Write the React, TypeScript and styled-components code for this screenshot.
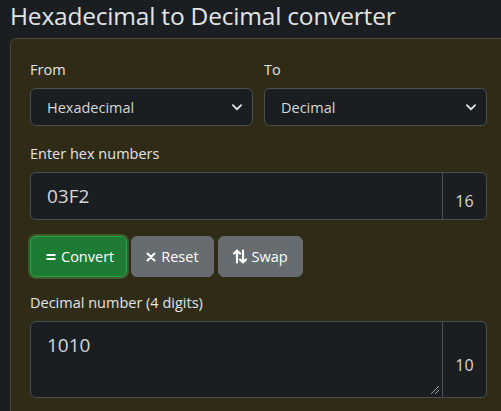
import React from "react";
import styled, { createGlobalStyle } from "styled-components";

const Global = createGlobalStyle`
  html, body { margin: 0; padding: 0; }
  body {
    background: #1b1e21;
    color: #dee2e6;
    font-family: "Open Sans", "Noto Sans", "Liberation Sans", sans-serif;
    overflow: hidden;
  }
  * { box-sizing: border-box; }
`;

const Page = styled.div`
  padding: 0 0 0 10px;
  width: 501px;
  height: 411px;
  overflow: hidden;
`;

const Title = styled.h2`
  margin: 0;
  padding-top: 0px;
  font-size: 24.5px;
  font-weight: 400;
  line-height: 32px;
  letter-spacing: -0.2px;
  color: #e1e4e7;
  white-space: nowrap;
`;

const Card = styled.div`
  margin-top: 6px;
  width: 540px;
  height: 400px;
  background: #302b16;
  border: 1px solid #4b4a3c;
  border-radius: 6px;
  padding: 20px 0 0 19px;
`;

const Content = styled.div`
  width: 457px;
  display: flex;
  flex-direction: column;
`;

const Row = styled.div`
  display: grid;
  grid-template-columns: 1fr 1fr;
  column-gap: 11px;
`;

const Field = styled.div`
  display: flex;
  flex-direction: column;
`;

const Label = styled.label<{ $mt?: number }>`
  font-size: 14.5px;
  line-height: 22px;
  color: #e1e4e7;
  margin-top: ${(p) => p.$mt ?? 0}px;
  margin-bottom: 7px;
  white-space: nowrap;
`;

const SelectBox = styled.div`
  height: 38px;
  border: 1px solid #4a4f54;
  border-radius: 6px;
  background: #1b1e21;
  display: flex;
  align-items: center;
  justify-content: space-between;
  padding: 0 9px 0 16px;
  font-size: 14.5px;
  color: #d4d7da;
`;

const Chevron = () => (
  <svg width="12" height="12" viewBox="0 0 16 16" fill="none">
    <path d="M2.5 5.5 8 11l5.5-5.5" stroke="#dee2e6" strokeWidth="2.4" strokeLinecap="round" strokeLinejoin="round" />
  </svg>
);

const Group = styled.div<{ $h: number }>`
  display: flex;
  height: ${(p) => p.$h}px;
`;

const Input = styled.div<{ $textarea?: boolean }>`
  flex: 1;
  position: relative;
  background: #1b1e21;
  border: 1px solid #4a4f54;
  border-radius: 6px 0 0 6px;
  padding: ${(p) => (p.$textarea ? "10px 16px" : "0 16px")};
  display: flex;
  align-items: ${(p) => (p.$textarea ? "flex-start" : "center")};
  font-size: 19px;
  color: #d4d7da;
`;

const Grip = styled.svg`
  position: absolute;
  right: 2px;
  bottom: 2px;
`;

const Addon = styled.div<{ $pt: number }>`
  width: 45px;
  margin-left: -1px;
  background: #1b1e21;
  border: 1px solid #4a4f54;
  border-radius: 0 6px 6px 0;
  display: flex;
  justify-content: center;
  align-items: center;
  padding-top: ${(p) => p.$pt}px;
  font-size: 16px;
  color: #d4d7da;
`;

const Buttons = styled.div`
  display: flex;
  gap: 4px;
  margin-top: 16px;
  align-items: center;
`;

const Btn = styled.button<{ $variant: "success" | "secondary" }>`
  height: 41px;
  border-radius: 6px;
  font-family: inherit;
  font-size: 14.5px;
  color: #fff;
  display: flex;
  align-items: center;
  gap: 5px;
  cursor: pointer;
  ${(p) =>
    p.$variant === "success"
      ? `
    background: #1e7b34;
    border: 1px solid #2aa14a;
    box-shadow: 0 0 0 2px #3c5a2b;
    padding: 0 12px 0 15px;
  `
      : `
    background: #666c70;
    border: 1px solid #666c70;
    padding: 0 14px;
  `}
`;

const EqIcon = () => (
  <svg width="10" height="10" viewBox="0 0 10 10">
    <rect x="0.5" y="2" width="9" height="2" fill="#fff" />
    <rect x="0.5" y="6" width="9" height="2" fill="#fff" />
  </svg>
);

const XIcon = () => (
  <svg width="10" height="10" viewBox="0 0 10 10">
    <path d="M1.5 1.5 8.5 8.5M8.5 1.5 1.5 8.5" stroke="#fff" strokeWidth="2" strokeLinecap="round" />
  </svg>
);

const SwapIcon = () => (
  <svg width="14" height="15" viewBox="0 0 14 15" fill="none" stroke="#fff" strokeWidth="2.2" strokeLinecap="round" strokeLinejoin="round">
    <path d="M4 13.5V1.5M1 4.5 4 1.5l3 3" />
    <path d="M10 1.5v12M7 10.5l3 3 3-3" />
  </svg>
);

export default function App() {
  return (
    <>
      <Global />
      <Page>
        <Title>Hexadecimal to Decimal converter</Title>
        <Card>
          <Content>
            <Row>
              <Field>
                <Label>From</Label>
                <SelectBox>
                  <span>Hexadecimal</span>
                  <Chevron />
                </SelectBox>
              </Field>
              <Field>
                <Label>To</Label>
                <SelectBox>
                  <span>Decimal</span>
                  <Chevron />
                </SelectBox>
              </Field>
            </Row>
            <Label $mt={17}>Enter hex numbers</Label>
            <Group $h={48}>
              <Input>03F2</Input>
              <Addon $pt={10}>16</Addon>
            </Group>
            <Buttons>
              <Btn $variant="success">
                <EqIcon />
                Convert
              </Btn>
              <Btn $variant="secondary">
                <XIcon />
                Reset
              </Btn>
              <Btn $variant="secondary">
                <SwapIcon />
                Swap
              </Btn>
            </Buttons>
            <Label $mt={15}>Decimal number (4 digits)</Label>
            <Group $h={77}>
              <Input $textarea>
                1010
                <Grip width="10" height="10" viewBox="0 0 10 10">
                  <path d="M1 9 9 1M5 9 9 5" stroke="#9aa0a6" strokeWidth="1" />
                </Grip>
              </Input>
              <Addon $pt={10}>10</Addon>
            </Group>
          </Content>
        </Card>
      </Page>
    </>
  );
}
